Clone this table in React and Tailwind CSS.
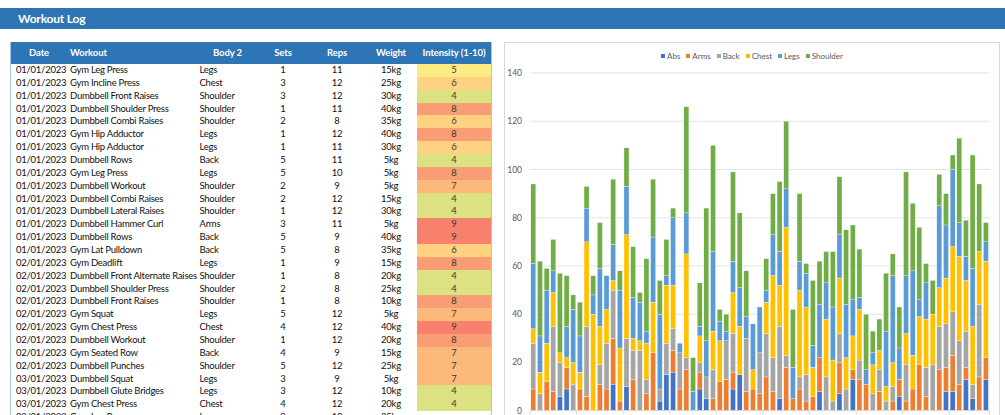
import React from "react";

const rows = [
  ["01/01/2023", "Gym Leg Press", "Legs", 1, 11, "15kg", 5],
  ["01/01/2023", "Gym Incline Press", "Chest", 3, 12, "25kg", 6],
  ["01/01/2023", "Dumbbell Front Raises", "Shoulder", 3, 12, "30kg", 4],
  ["01/01/2023", "Dumbbell Shoulder Press", "Shoulder", 1, 11, "40kg", 8],
  ["01/01/2023", "Dumbbell Combi Raises", "Shoulder", 2, 8, "35kg", 6],
  ["01/01/2023", "Gym Hip Adductor", "Legs", 1, 12, "40kg", 8],
  ["01/01/2023", "Gym Hip Adductor", "Legs", 1, 11, "30kg", 6],
  ["01/01/2023", "Dumbbell Rows", "Back", 5, 11, "5kg", 4],
  ["01/01/2023", "Gym Leg Press", "Legs", 5, 10, "5kg", 8],
  ["01/01/2023", "Dumbbell Workout", "Shoulder", 2, 9, "5kg", 7],
  ["01/01/2023", "Dumbbell Combi Raises", "Shoulder", 2, 12, "15kg", 4],
  ["01/01/2023", "Dumbbell Lateral Raises", "Shoulder", 1, 12, "30kg", 4],
  ["01/01/2023", "Dumbbell Hammer Curl", "Arms", 3, 11, "5kg", 9],
  ["01/01/2023", "Dumbbell Rows", "Back", 5, 9, "40kg", 9],
  ["01/01/2023", "Gym Lat Pulldown", "Back", 5, 8, "35kg", 6],
  ["02/01/2023", "Gym Deadlift", "Legs", 1, 9, "15kg", 8],
  ["02/01/2023", "Dumbbell Front Alternate Raises", "Shoulder", 1, 8, "20kg", 4],
  ["02/01/2023", "Dumbbell Shoulder Press", "Shoulder", 2, 8, "25kg", 4],
  ["02/01/2023", "Dumbbell Front Raises", "Shoulder", 1, 8, "10kg", 8],
  ["02/01/2023", "Gym Squat", "Legs", 5, 12, "5kg", 7],
  ["02/01/2023", "Gym Chest Press", "Chest", 4, 12, "40kg", 9],
  ["02/01/2023", "Dumbbell Workout", "Shoulder", 1, 12, "20kg", 8],
  ["02/01/2023", "Gym Seated Row", "Back", 4, 9, "15kg", 7],
  ["02/01/2023", "Dumbbell Punches", "Shoulder", 5, 12, "25kg", 7],
  ["03/01/2023", "Dumbbell Squat", "Legs", 3, 9, "5kg", 7],
  ["03/01/2023", "Dumbbell Glute Bridges", "Legs", 3, 12, "10kg", 4],
  ["03/01/2023", "Gym Chest Press", "Chest", 4, 12, "20kg", 4],
  ["03/01/2023", "Gym Leg Press", "Legs", 2, 10, "25kg", 0],
];

const intensityBg = {
  0: "bg-white",
  4: "bg-[#DCE182]",
  5: "bg-[#FFEB84]",
  6: "bg-[#FED280]",
  7: "bg-[#FCB97A]",
  8: "bg-[#F99D74]",
  9: "bg-[#F8816E]",
};

// abs, arms, back, chest, legs, shoulder
const bars = [
  [0, 9, 19, 6, 27, 33], [0, 0, 7, 9, 15, 31], [0, 12, 0, 16, 22, 9], [0, 8, 27, 14, 9, 13],
  [6, 0, 14, 4, 0, 33], [9, 9, 0, 4, 13, 21], [0, 0, 11, 9, 22, 6], [0, 9, 0, 7, 15, 14],
  [0, 6, 29, 35, 14, 9], [0, 0, 0, 40, 8, 8], [0, 11, 8, 16, 24, 19], [0, 9, 19, 14, 14, 0],
  [11, 19, 20, 4, 15, 27], [0, 4, 0, 22, 24, 8], [10, 0, 20, 43, 20, 16], [0, 13, 12, 5, 17, 21],
  [0, 0, 25, 4, 16, 4], [0, 7, 6, 15, 5, 30], [0, 24, 0, 21, 27, 24], [4, 0, 5, 0, 31, 14],
  [15, 0, 13, 24, 4, 15], [16, 9, 9, 18, 28, 4], [0, 9, 15, 0, 4, 0], [0, 17, 5, 43, 17, 44],
  [0, 0, 0, 0, 8, 14], [9, 7, 4, 11, 4, 18], [5, 0, 9, 0, 15, 55], [0, 5, 12, 16, 33, 44],
  [0, 12, 0, 17, 8, 5], [0, 13, 16, 0, 4, 7], [9, 7, 16, 17, 13, 37], [15, 0, 0, 20, 16, 31],
  [0, 8, 22, 0, 9, 19], [0, 9, 0, 8, 19, 0], [0, 7, 17, 0, 19, 0], [0, 14, 18, 13, 5, 13],
  [0, 8, 14, 34, 17, 17], [5, 0, 30, 17, 14, 29], [0, 18, 5, 53, 16, 28], [0, 5, 0, 0, 13, 24],
  [0, 9, 5, 36, 12, 28], [0, 4, 11, 28, 14, 4], [0, 6, 0, 12, 9, 27], [8, 14, 0, 0, 22, 18],
  [0, 0, 14, 24, 15, 13], [0, 0, 4, 17, 22, 23], [7, 13, 12, 23, 18, 24], [0, 0, 9, 13, 22, 31],
  [13, 4, 0, 14, 15, 31], [0, 13, 8, 21, 5, 20], [0, 11, 0, 0, 6, 23], [0, 0, 7, 12, 5, 9],
  [0, 8, 9, 8, 0, 13], [0, 0, 4, 6, 23, 24], [0, 4, 6, 10, 36, 9], [6, 7, 0, 0, 13, 17],
  [0, 4, 15, 13, 24, 43], [0, 9, 0, 14, 35, 28], [0, 19, 0, 20, 7, 30], [0, 6, 12, 20, 15, 8],
  [0, 0, 19, 21, 0, 14], [0, 17, 18, 16, 34, 13], [8, 10, 18, 19, 22, 13], [8, 15, 18, 27, 32, 6],
  [0, 11, 18, 35, 14, 35], [13, 5, 15, 21, 10, 15], [5, 0, 6, 24, 24, 47], [0, 14, 30, 22, 0, 28],
  [13, 9, 0, 40, 8, 8],
];

const series = [
  { name: "Abs", color: "#4472C4", sq: "bg-[#4472C4]" },
  { name: "Arms", color: "#ED7D31", sq: "bg-[#ED7D31]" },
  { name: "Back", color: "#A5A5A5", sq: "bg-[#A5A5A5]" },
  { name: "Chest", color: "#FFC000", sq: "bg-[#FFC000]" },
  { name: "Legs", color: "#5B9BD5", sq: "bg-[#5B9BD5]" },
  { name: "Shoulder", color: "#70AD47", sq: "bg-[#70AD47]" },
];

const cols = "grid grid-cols-[56px_131px_59px_52px_56px_52px_74px]";

const Chart = () => {
  const base = 341.7;
  const unit = 2.412;
  const left = 25;
  const pitch = 6.656;
  return (
    <svg width="494" height="350" className="block">
      {[0, 20, 40, 60, 80, 100, 120, 140].map((v) => (
        <g key={v}>
          {v > 0 && (
            <line x1={left} x2="485" y1={base - v * unit} y2={base - v * unit} stroke="#E3E3E3" strokeWidth="1" />
          )}
          <text
            x="17"
            y={base - v * unit + 3}
            textAnchor="end"
            fontSize="8.5"
            fill="#595959"
            fontFamily="Lato, sans-serif"
          >
            {v}
          </text>
        </g>
      ))}
      {bars.map((b, i) => {
        let acc = 0;
        const x = left + i * pitch + 0.8;
        return (
          <g key={i}>
            {b.map((val, s) => {
              if (!val) return null;
              const y = base - (acc + val) * unit;
              acc += val;
              return (
                <rect
                  key={s}
                  x={x}
                  y={y}
                  width="5"
                  height={val * unit}
                  fill={series[s].color}
                  stroke="#ffffff"
                  strokeWidth="0.3"
                />
              );
            })}
          </g>
        );
      })}
      <line x1={left} x2="485" y1={base} y2={base} stroke="#D9D9D9" strokeWidth="1" />
      {[0, 1, 2, 3, 4, 5, 6, 7, 8, 9].map((k) => (
        <line key={k} x1={left + k * 46.6} x2={left + k * 46.6} y1={base} y2={base + 4} stroke="#D9D9D9" strokeWidth="1" />
      ))}
      <line x1="484.5" x2="484.5" y1={base} y2={base + 4} stroke="#D9D9D9" strokeWidth="1" />
    </svg>
  );
};

const App = () => {
  return (
    <div className="w-[1005px] h-[415px] overflow-hidden bg-white pt-[8px] font-['Lato',sans-serif]">
      <div className="h-[21px] bg-[#2E75B6] flex items-center pl-[18px]">
        <span className="text-white font-bold text-[12px] tracking-[-0.2px]">Workout Log</span>
      </div>

      <div className="flex items-start mt-[13px]">
        <div className="ml-[10px] w-[482px] border-x border-[#A9C4EB]">
          <div className={`${cols} h-[22px] bg-[#2E75B6] text-white font-bold text-[9.5px] tracking-[-0.1px] items-center`}>
            <div className="text-center">Date</div>
            <div className="pl-[3px]">Workout</div>
            <div className="text-center">Body 2</div>
            <div className="text-center">Sets</div>
            <div className="text-center">Reps</div>
            <div className="text-center">Weight</div>
            <div className="text-center">Intensity (1-10)</div>
          </div>
          {rows.map((r, i) => (
            <div key={i} className={`${cols} h-[12.86px] text-[9.5px] tracking-[-0.25px] leading-[12.86px] text-[#111]`}>
              <div className="pl-[5px]">{r[0]}</div>
              <div className="pl-[3px] whitespace-nowrap">{r[1]}</div>
              <div className="pl-[1.5px]">{r[2]}</div>
              <div className="text-center">{r[3]}</div>
              <div className="text-center">{r[4]}</div>
              <div className="text-center">{r[5]}</div>
              <div className={`text-center text-[#3a3a3a] ${intensityBg[r[6]]}`}>{r[6] || ""}</div>
            </div>
          ))}
        </div>

        <div className="ml-[12px] w-[496px] h-[380px] border border-[#D9D9D9]">
          <div className="h-[26px] flex items-center justify-center gap-[6px] text-[8px] text-[#595959]">
            {series.map((s) => (
              <div key={s.name} className="flex items-center gap-[2px]">
                <span className={`w-[4px] h-[4px] ${s.sq}`} />
                <span>{s.name}</span>
              </div>
            ))}
          </div>
          <Chart />
        </div>
      </div>
    </div>
  );
};

export default App;
